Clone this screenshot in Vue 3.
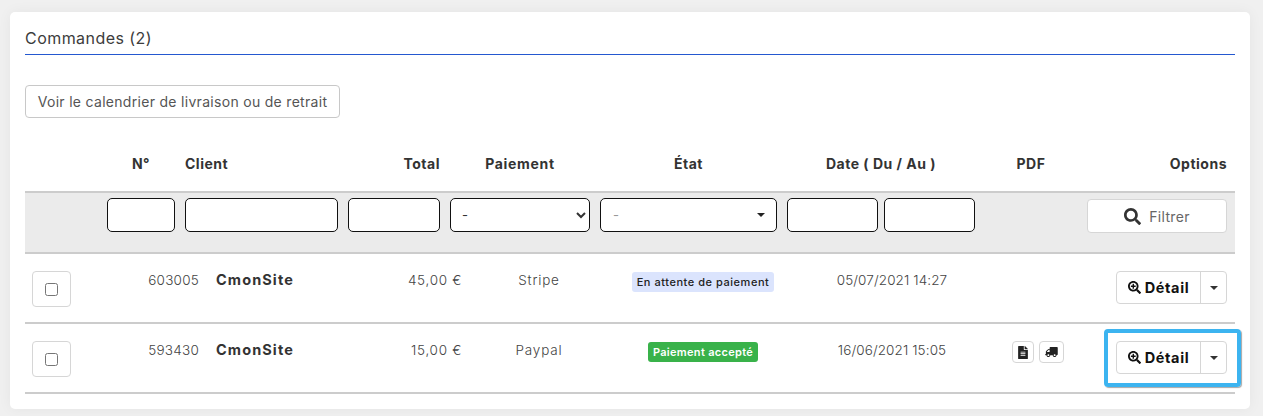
<script setup>
const orders = [
  { id: '603005', client: 'CmonSite', total: '45,00 €', pay: 'Stripe', state: 'En attente de paiement', kind: 'wait', date: '05/07/2021 14:27', pdf: false, focus: false },
  { id: '593430', client: 'CmonSite', total: '15,00 €', pay: 'Paypal', state: 'Paiement accepté', kind: 'ok', date: '16/06/2021 15:05', pdf: true, focus: true },
]
const plus = 'M304 192v32c0 6.6-5.4 12-12 12h-56v56c0 6.6-5.4 12-12 12h-32c-6.6 0-12-5.4-12-12v-56h-56c-6.6 0-12-5.4-12-12v-32c0-6.6 5.4-12 12-12h56v-56c0-6.6 5.4-12 12-12h32c6.6 0 12 5.4 12 12v56h56c6.6 0 12 5.4 12 12zm201 284.7L476.7 505c-9.4 9.4-24.6 9.4-33.9 0L343 405.3c-4.5-4.5-7-10.6-7-17V372c-35.3 27.6-79.7 44-128 44C93.1 416 0 322.9 0 208S93.1 0 208 0s208 93.1 208 208c0 48.3-16.4 92.7-44 128h16.3c6.4 0 12.5 2.5 17 7l99.7 99.7c9.4 9.4 9.4 24.6 0 34zM344 208c0-75.2-60.8-136-136-136S72 132.8 72 208s60.8 136 136 136 136-60.8 136-136z'
const search = 'M505 442.7L405.3 343c-4.5-4.5-10.6-7-17-7H372c27.6-35.3 44-79.7 44-128C416 93.1 322.9 0 208 0S0 93.1 0 208s93.1 208 208 208c48.3 0 92.7-16.4 128-44v16.3c0 6.4 2.5 12.5 7 17l99.7 99.7c9.4 9.4 24.6 9.4 33.9 0l28.3-28.3c9.4-9.4 9.4-24.6.1-34zM208 336c-70.7 0-128-57.2-128-128 0-70.7 57.2-128 128-128 70.7 0 128 57.2 128 128 0 70.7-57.2 128-128 128z'
const file = 'M224 136V0H24C10.7 0 0 10.7 0 24v464c0 13.3 10.7 24 24 24h336c13.3 0 24-10.7 24-24V160H248c-13.2 0-24-10.8-24-24zm64 236c0 6.6-5.4 12-12 12H108c-6.6 0-12-5.4-12-12v-8c0-6.6 5.4-12 12-12h168c6.6 0 12 5.4 12 12v8zm0-64c0 6.6-5.4 12-12 12H108c-6.6 0-12-5.4-12-12v-8c0-6.6 5.4-12 12-12h168c6.6 0 12 5.4 12 12v8zm0-72v8c0 6.6-5.4 12-12 12H108c-6.6 0-12-5.4-12-12v-8c0-6.6 5.4-12 12-12h168c6.6 0 12 5.4 12 12zm96-114.1v6.1H256V0h6.1c6.4 0 12.5 2.5 17 7l97.9 98c4.5 4.5 7 10.6 7 16.9z'
const truck = 'M624 352h-16V243.9c0-12.7-5.1-24.9-14.1-33.9L494 110.1c-9-9-21.2-14.1-33.9-14.1H416V48c0-26.5-21.5-48-48-48H48C21.5 0 0 21.5 0 48v320c0 26.5 21.5 48 48 48h16c0 53 43 96 96 96s96-43 96-96h128c0 53 43 96 96 96s96-43 96-96h48c8.8 0 16-7.2 16-16v-32c0-8.8-7.2-16-16-16zM160 464c-26.5 0-48-21.5-48-48s21.5-48 48-48 48 21.5 48 48-21.5 48-48 48zm320 0c-26.5 0-48-21.5-48-48s21.5-48 48-48 48 21.5 48 48-21.5 48-48 48zm80-208H416V144h44.1l99.9 99.9V256z'
</script>

<template>
  <div class="page">
    <section class="card">
      <h2 class="title">Commandes (2)</h2>
      <button class="calendar" type="button">Voir le calendrier de livraison ou de retrait</button>

      <div class="head grid">
        <span class="center">N°</span>
        <span>Client</span>
        <span class="right">Total</span>
        <span class="center wider">Paiement</span>
        <span class="center">État</span>
        <span class="center">Date ( Du / Au )</span>
        <span class="center">PDF</span>
        <span class="right">Options</span>
      </div>

      <div class="filters grid">
        <input class="field" type="text" aria-label="Numéro" />
        <input class="field" type="text" aria-label="Client" />
        <input class="field" type="text" aria-label="Total" />
        <select class="field native" aria-label="Paiement"><option>-</option></select>
        <div class="field fake"><span>-</span><i class="fake-caret"></i></div>
        <div class="dates">
          <input class="field" type="text" aria-label="Du" />
          <input class="field" type="text" aria-label="Au" />
        </div>
        <span></span>
        <button class="filter-btn" type="button">
          <svg class="search" viewBox="0 0 512 512"><path :d="search" /></svg>
          <span>Filtrer</span>
        </button>
      </div>

      <div v-for="o in orders" :key="o.id" class="row">
        <label class="check"><input type="checkbox" /></label>
        <span class="num">{{ o.id }}</span>
        <span class="client">
          <b>{{ o.client }}</b>
          <span class="total">{{ o.total }}</span>
        </span>
        <span class="pay">{{ o.pay }}</span>
        <span class="state"><span class="badge" :class="o.kind">{{ o.state }}</span></span>
        <span class="date">{{ o.date }}</span>
        <span class="pdf">
          <template v-if="o.pdf">
            <button class="mini" type="button"><svg class="i-file" viewBox="0 0 384 512"><path :d="file" /></svg></button>
            <button class="mini wide" type="button"><svg class="i-truck" viewBox="0 0 640 512"><path :d="truck" transform="matrix(-1 0 0 1 640 0)" /></svg></button>
          </template>
        </span>
        <div class="options" :class="{ focused: o.focus }">
          <button class="detail" type="button">
            <svg class="i-plus" viewBox="0 0 512 512"><path :d="plus" /></svg>
            <span>Détail</span>
          </button>
          <button class="caret" type="button" aria-label="Plus"><i></i></button>
        </div>
      </div>
    </section>
  </div>
</template>

<style>
html, body { margin: 0; background: #f0f0f0; }
</style>

<style scoped>
.page {
  height: 416px;
  box-sizing: border-box;
  padding: 12px 13px 7px 10px;
  overflow: hidden;
  font-family: Inter, "Open Sans", sans-serif;
  color: #333;
}
.card {
  height: 397px;
  box-sizing: border-box;
  padding: 14px 15px 0;
  background: #fff;
  border-radius: 5px;
  box-shadow: 0 0 14px rgba(0, 0, 0, 0.05);
}
.title {
  margin: 0;
  height: 28px;
  line-height: 24px;
  font-size: 16px;
  font-weight: 400;
  letter-spacing: 0.45px;
  color: #3c3c3c;
  border-bottom: 1px solid #2458d0;
}
.calendar {
  display: block;
  margin-top: 30px;
  width: 315px;
  height: 33px;
  padding: 0;
  background: #fff;
  border: 1px solid #c8c8c8;
  border-radius: 4px;
  font: 400 14px Inter, sans-serif;
  letter-spacing: 0.3px;
  color: #555;
}
.grid {
  display: grid;
  grid-template-columns: 68px 153px 92px 140px 177px 188px 92px 140px;
  column-gap: 10px;
  padding-left: 82px;
  padding-right: 8px;
  align-items: center;
}
.head {
  margin-top: 22px;
  height: 53px;
  box-sizing: border-box;
  padding-bottom: 4px;
  font-size: 14px;
  font-weight: 700;
  letter-spacing: 0.5px;
  color: #333;
  border-bottom: 2px solid #ccc;
}
.wider { letter-spacing: 0.7px; }
.center { text-align: center; }
.right { text-align: right; }
.filters {
  height: 61px;
  box-sizing: border-box;
  padding-top: 5px;
  align-items: start;
  background: #ebebeb;
  border-bottom: 2px solid #ccc;
}
.field {
  display: block;
  box-sizing: border-box;
  width: 100%;
  height: 34px;
  margin: 0;
  background: #fff;
  border: 1px solid #111;
  border-radius: 5px;
}
.native {
  padding-left: 7px;
  font: 400 13px Inter, sans-serif;
  color: #333;
}
.fake {
  display: flex;
  align-items: center;
  justify-content: space-between;
  padding: 0 11px 0 12px;
  font-size: 13px;
  color: #999;
}
.fake-caret {
  width: 0;
  height: 0;
  border-left: 4px solid transparent;
  border-right: 4px solid transparent;
  border-top: 4px solid #222;
}
.dates { display: flex; gap: 6px; }
.filter-btn {
  display: flex;
  align-items: center;
  justify-content: center;
  gap: 8px;
  width: 140px;
  height: 34px;
  margin-top: 1px;
  padding: 0;
  background: #fff;
  border: 1px solid #d6d6d6;
  border-radius: 4px;
  font: 400 14px Inter, sans-serif;
  letter-spacing: 0.3px;
  color: #666;
}
.search { width: 17px; height: 17px; fill: #333; }
.row {
  display: grid;
  grid-template-columns: 39px 128px 263px 154px 174px 204px 122px 111px;
  padding: 17px 0 0 7px;
  height: 70px;
  box-sizing: border-box;
  border-bottom: 2px solid #ccc;
  font-size: 13.5px;
  color: #444;
  align-items: start;
}
.check {
  display: flex;
  align-items: center;
  justify-content: center;
  height: 36px;
  box-sizing: border-box;
  border: 1px solid #d6d6d6;
  border-radius: 4px;
}
.check input { margin: 0; width: 13px; height: 13px; }
.num { text-align: right; line-height: 18px; font-weight: 300; letter-spacing: 0.25px; }
.client {
  display: flex;
  justify-content: space-between;
  padding-left: 17px;
  line-height: 18px;
}
.client b { font-size: 14.5px; font-weight: 700; letter-spacing: 1.1px; color: #333; }
.total { font-weight: 300; letter-spacing: 0.7px; }
.pay { text-align: center; line-height: 18px; font-weight: 300; letter-spacing: 0.8px; }
.state { text-align: center; line-height: 20px; }
.badge {
  display: inline-block;
  padding: 0 5px;
  height: 20px;
  line-height: 20px;
  border-radius: 3px;
  font-size: 11px;
  font-weight: 500;
  letter-spacing: 0.54px;
}
.badge.wait { background: #dbe4fd; color: #222; }
.badge.ok { background: #39b24a; color: #fff; font-weight: 600; letter-spacing: 0.3px; }
.date { text-align: center; line-height: 18px; font-weight: 300; letter-spacing: 0.1px; }
.pdf { display: flex; gap: 5px; padding-left: 18px; }
.mini {
  display: flex;
  align-items: center;
  justify-content: center;
  width: 22px;
  height: 22px;
  padding: 0;
  background: #fff;
  border: 1px solid #d6d6d6;
  border-radius: 4px;
}
.mini.wide { width: 25px; }
.i-file { width: 10px; height: 13px; fill: #222; }
.i-truck { width: 13px; height: 10px; fill: #222; }
.options {
  position: relative;
  display: flex;
  height: 33px;
  box-sizing: border-box;
  background: #fff;
  border: 1px solid #d6d6d6;
  border-radius: 4px;
}
.options.focused::after {
  content: "";
  position: absolute;
  left: -13px;
  right: -15px;
  top: -13px;
  bottom: -14px;
  border: 4px solid #3cb4f0;
  border-radius: 4px;
  box-shadow: 1px 1px 1px rgba(0, 0, 0, 0.35);
  pointer-events: none;
}
.detail {
  flex: 1;
  display: flex;
  align-items: center;
  justify-content: center;
  gap: 4px;
  padding: 0;
  background: none;
  border: 0;
  border-right: 1px solid #d6d6d6;
  font: 700 14.5px Inter, sans-serif;
  letter-spacing: 0.65px;
  color: #111;
}
.i-plus { width: 13px; height: 13px; fill: #111; }
.caret {
  width: 25px;
  padding: 0;
  background: none;
  border: 0;
  display: flex;
  align-items: center;
  justify-content: center;
}
.caret i {
  width: 0;
  height: 0;
  border-left: 4px solid transparent;
  border-right: 4px solid transparent;
  border-top: 4px solid #333;
}
</style>
